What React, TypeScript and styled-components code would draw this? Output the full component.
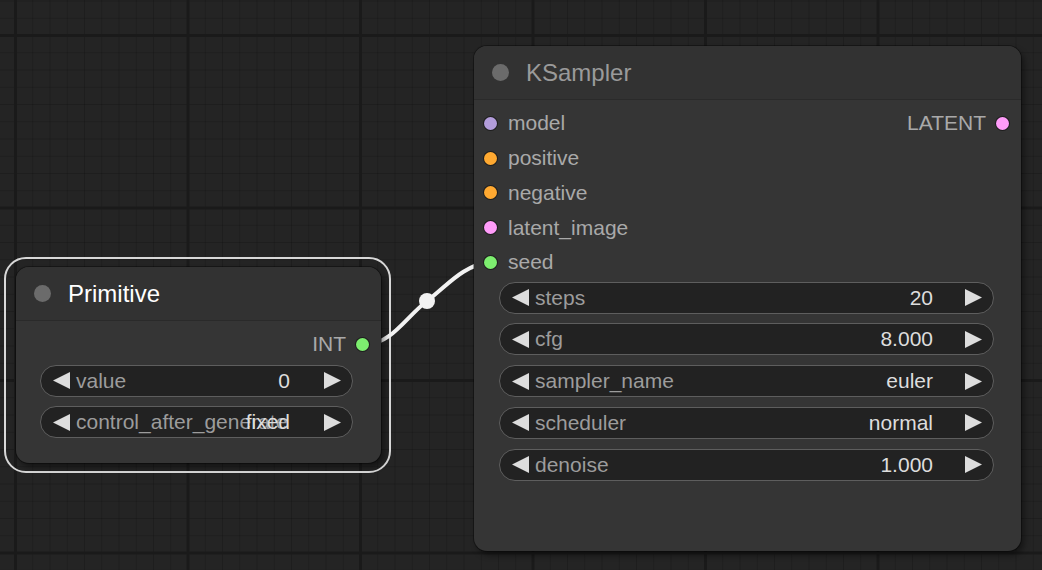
import React from 'react';
import styled, { createGlobalStyle } from 'styled-components';

const GlobalStyle = createGlobalStyle`
  html, body {
    margin: 0;
    padding: 0;
    background: #232323;
  }
  * {
    box-sizing: border-box;
  }
`;

const Canvas = styled.div`
  position: relative;
  width: 1042px;
  height: 570px;
  overflow: hidden;
  font-family: "Liberation Sans", Arial, sans-serif;
  background-color: #242424;
  background-image:
    linear-gradient(to right, #1a1a1a 0 3px, transparent 3px),
    linear-gradient(to bottom, #1a1a1a 0 3px, transparent 3px),
    linear-gradient(to right, rgba(0, 0, 0, 0.16) 0 1px, transparent 1px),
    linear-gradient(to bottom, rgba(0, 0, 0, 0.16) 0 1px, transparent 1px);
  background-size: 172.5px 172.5px, 172.5px 172.5px, 17.25px 17.25px, 17.25px 17.25px;
  background-position: 14px 0, 0 34px, 15px 0, 0 35px;
`;

const LinkLayer = styled.svg`
  position: absolute;
  left: 0;
  top: 0;
  width: 1042px;
  height: 570px;
  pointer-events: none;
`;

const SelectionRing = styled.div<{ $x: number; $y: number; $w: number; $h: number }>`
  position: absolute;
  left: ${p => p.$x}px;
  top: ${p => p.$y}px;
  width: ${p => p.$w}px;
  height: ${p => p.$h}px;
  border: 2px solid #d8d8d8;
  border-radius: 22px;
`;

const Node = styled.div<{ $x: number; $y: number; $w: number; $h: number }>`
  position: absolute;
  left: ${p => p.$x}px;
  top: ${p => p.$y}px;
  width: ${p => p.$w}px;
  height: ${p => p.$h}px;
  background: #353535;
  border-radius: 13px;
  box-shadow: 0 0 0 1px rgba(0, 0, 0, 0.35), 3px 4px 6px rgba(0, 0, 0, 0.45);
  display: flex;
  flex-direction: column;
`;

const TitleBar = styled.div`
  height: 54px;
  display: flex;
  align-items: center;
  padding-left: 18px;
  gap: 17px;
  background: #323232;
  border-radius: 13px 13px 0 0;
  border-bottom: 1px solid #2a2a2a;
`;

const TitleDot = styled.span`
  width: 17px;
  height: 17px;
  border-radius: 50%;
  background: #6b6b6b;
`;

const TitleText = styled.span<{ $selected?: boolean }>`
  font-size: 24px;
  color: ${p => (p.$selected ? '#ffffff' : '#9a9a9a')};
`;

const Body = styled.div`
  padding-top: 6px;
  display: flex;
  flex-direction: column;
`;

const SlotGrid = styled.div`
  display: grid;
  grid-template-columns: 1fr auto;
`;

const SlotColumn = styled.div<{ $right?: boolean }>`
  display: flex;
  flex-direction: column;
  align-items: ${p => (p.$right ? 'flex-end' : 'flex-start')};
`;

const SlotRow = styled.div<{ $right?: boolean }>`
  height: 34.75px;
  display: flex;
  align-items: center;
  gap: ${p => (p.$right ? '10px' : '11px')};
  flex-direction: ${p => (p.$right ? 'row-reverse' : 'row')};
  padding: ${p => (p.$right ? '0 12px 0 0' : '0 0 0 10px')};
`;

const SlotDot = styled.span<{ $color: string }>`
  width: 13px;
  height: 13px;
  border-radius: 50%;
  background: ${p => p.$color};
  box-shadow: 0 0 0 1px #1e1e1e;
`;

const SlotLabel = styled.span`
  font-size: 21px;
  color: #a9a9a9;
`;

const WidgetList = styled.div<{ $top: number; $left: number; $right: number }>`
  display: flex;
  flex-direction: column;
  gap: 9.7px;
  margin: ${p => `${p.$top}px ${p.$right}px 0 ${p.$left}px`};
`;

const Widget = styled.div<{ $valueGap: number }>`
  height: 32px;
  border-radius: 16px;
  background: #222222;
  border: 1px solid #5e5e5e;
  display: grid;
  grid-template-columns: 17px 1fr 17px;
  grid-template-areas: 'la text ra';
  align-items: center;
  column-gap: 6px;
  padding: 0 11px 0 12px;
  font-size: 21px;
  white-space: nowrap;
  overflow: hidden;

  .value {
    grid-area: text;
    justify-self: end;
    margin-right: ${p => p.$valueGap}px;
    color: #dddddd;
  }
`;

const WidgetLabel = styled.span`
  grid-area: text;
  color: #9c9c9c;
`;

const ArrowIcon = styled.svg<{ $area: string }>`
  grid-area: ${p => p.$area};
  width: 17px;
  height: 17px;
  fill: #dddddd;
`;

const LeftArrow = () => (
  <ArrowIcon $area="la" viewBox="0 0 17 17">
    <polygon points="17,0 17,17 0,8.5" />
  </ArrowIcon>
);

const RightArrow = () => (
  <ArrowIcon $area="ra" viewBox="0 0 17 17">
    <polygon points="0,0 0,17 17,8.5" />
  </ArrowIcon>
);

type Slot = { name: string; color: string };
type WidgetData = { label: string; value: string };

const COLORS = {
  MODEL: '#b39ddb',
  CONDITIONING: '#ffa931',
  LATENT: '#ff9cf9',
  INT: '#7dee6f',
};

const ksInputs: Slot[] = [
  { name: 'model', color: COLORS.MODEL },
  { name: 'positive', color: COLORS.CONDITIONING },
  { name: 'negative', color: COLORS.CONDITIONING },
  { name: 'latent_image', color: COLORS.LATENT },
  { name: 'seed', color: COLORS.INT },
];

const ksWidgets: WidgetData[] = [
  { label: 'steps', value: '20' },
  { label: 'cfg', value: '8.000' },
  { label: 'sampler_name', value: 'euler' },
  { label: 'scheduler', value: 'normal' },
  { label: 'denoise', value: '1.000' },
];

const primWidgets: WidgetData[] = [
  { label: 'value', value: '0' },
  { label: 'control_after_generate', value: 'fixed' },
];

const WidgetRow: React.FC<{ w: WidgetData; valueGap: number }> = ({ w, valueGap }) => (
  <Widget $valueGap={valueGap}>
    <LeftArrow />
    <WidgetLabel>{w.label}</WidgetLabel>
    <span className="value">{w.value}</span>
    <RightArrow />
  </Widget>
);

const App: React.FC = () => {
  return (
    <>
      <GlobalStyle />
      <Canvas>
        <SelectionRing $x={4} $y={257} $w={387} $h={216} />

        <LinkLayer viewBox="0 0 1042 570">
          <path
            d="M 366 345 C 392 343, 405 318, 427 301 S 462 266, 490 262"
            fill="none"
            stroke="#f2f2f2"
            strokeWidth={4}
            strokeLinecap="round"
          />
          <circle cx={427} cy={301} r={8} fill="#f2f2f2" />
        </LinkLayer>

        <Node $x={16} $y={267} $w={365} $h={196}>
          <TitleBar>
            <TitleDot />
            <TitleText $selected>Primitive</TitleText>
          </TitleBar>
          <Body>
            <SlotGrid>
              <SlotColumn />
              <SlotColumn $right>
                <SlotRow $right>
                  <SlotDot $color={COLORS.INT} />
                  <SlotLabel>INT</SlotLabel>
                </SlotRow>
              </SlotColumn>
            </SlotGrid>
            <WidgetList $top={3} $left={24} $right={28}>
              {primWidgets.map(w => (
                <WidgetRow key={w.label} w={w} valueGap={28} />
              ))}
            </WidgetList>
          </Body>
        </Node>

        <Node $x={474} $y={46} $w={547} $h={505}>
          <TitleBar>
            <TitleDot />
            <TitleText>KSampler</TitleText>
          </TitleBar>
          <Body>
            <SlotGrid>
              <SlotColumn>
                {ksInputs.map(s => (
                  <SlotRow key={s.name}>
                    <SlotDot $color={s.color} />
                    <SlotLabel>{s.name}</SlotLabel>
                  </SlotRow>
                ))}
              </SlotColumn>
              <SlotColumn $right>
                <SlotRow $right>
                  <SlotDot $color={COLORS.LATENT} />
                  <SlotLabel>LATENT</SlotLabel>
                </SlotRow>
              </SlotColumn>
            </SlotGrid>
            <WidgetList $top={2} $left={25} $right={27}>
              {ksWidgets.map(w => (
                <WidgetRow key={w.label} w={w} valueGap={26} />
              ))}
            </WidgetList>
          </Body>
        </Node>
      </Canvas>
    </>
  );
};

export default App;
